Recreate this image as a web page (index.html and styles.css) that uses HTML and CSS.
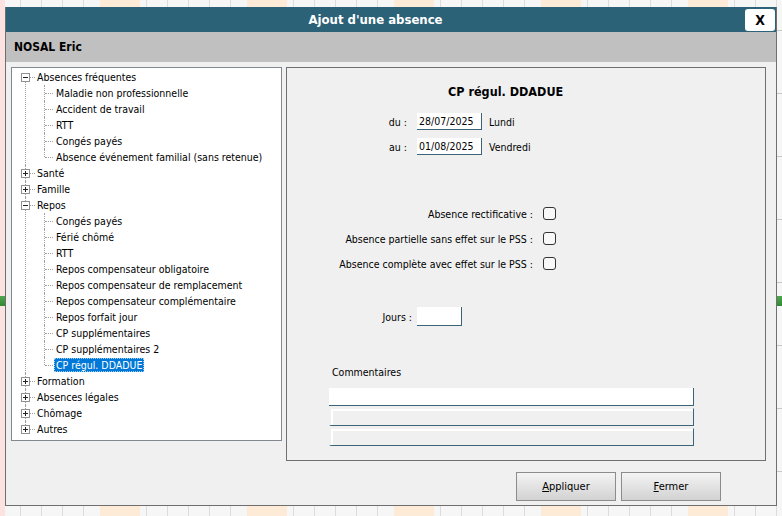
FILE: index.html
```html
<!DOCTYPE html>
<html lang="fr">
<head>
  <meta charset="UTF-8">
  <title>Ajout d'une absence</title>
  <link rel="stylesheet" href="styles.css">
</head>
<body>
  <div class="sheet">
    <div class="dialog">
      <div class="titlebar">
        <div class="title">Ajout d'une absence</div>
        <button class="close-btn">X</button>
      </div>
      <div class="namebar">NOSAL Eric</div>

      <div class="content">
        <!-- Tree of absence types -->
        <div class="tree-box">
          <ul class="tree">
            <li class="node">
              <div class="row">
                <svg class="toggle" width="9" height="9" viewBox="0 0 9 9"><rect x="0.5" y="0.5" width="8" height="8" fill="#fff" stroke="#919191"/><path d="M2 4.5h5" stroke="#222"/></svg>
                <span class="label">Absences fréquentes</span>
              </div>
              <ul class="leaves">
                <li><span class="label">Maladie non professionnelle</span></li>
                <li><span class="label">Accident de travail</span></li>
                <li><span class="label">RTT</span></li>
                <li><span class="label">Congés payés</span></li>
                <li><span class="label">Absence événement familial (sans retenue)</span></li>
              </ul>
            </li>
            <li class="node">
              <div class="row">
                <svg class="toggle" width="9" height="9" viewBox="0 0 9 9"><rect x="0.5" y="0.5" width="8" height="8" fill="#fff" stroke="#919191"/><path d="M2 4.5h5M4.5 2v5" stroke="#222"/></svg>
                <span class="label">Santé</span>
              </div>
            </li>
            <li class="node">
              <div class="row">
                <svg class="toggle" width="9" height="9" viewBox="0 0 9 9"><rect x="0.5" y="0.5" width="8" height="8" fill="#fff" stroke="#919191"/><path d="M2 4.5h5M4.5 2v5" stroke="#222"/></svg>
                <span class="label">Famille</span>
              </div>
            </li>
            <li class="node">
              <div class="row">
                <svg class="toggle" width="9" height="9" viewBox="0 0 9 9"><rect x="0.5" y="0.5" width="8" height="8" fill="#fff" stroke="#919191"/><path d="M2 4.5h5" stroke="#222"/></svg>
                <span class="label">Repos</span>
              </div>
              <ul class="leaves">
                <li><span class="label">Congés payés</span></li>
                <li><span class="label">Férié chômé</span></li>
                <li><span class="label">RTT</span></li>
                <li><span class="label">Repos compensateur obligatoire</span></li>
                <li><span class="label">Repos compensateur de remplacement</span></li>
                <li><span class="label">Repos compensateur complémentaire</span></li>
                <li><span class="label">Repos forfait jour</span></li>
                <li><span class="label">CP supplémentaires</span></li>
                <li><span class="label">CP supplémentaires 2</span></li>
                <li><span class="label selected">CP régul. DDADUE</span></li>
              </ul>
            </li>
            <li class="node">
              <div class="row">
                <svg class="toggle" width="9" height="9" viewBox="0 0 9 9"><rect x="0.5" y="0.5" width="8" height="8" fill="#fff" stroke="#919191"/><path d="M2 4.5h5M4.5 2v5" stroke="#222"/></svg>
                <span class="label">Formation</span>
              </div>
            </li>
            <li class="node">
              <div class="row">
                <svg class="toggle" width="9" height="9" viewBox="0 0 9 9"><rect x="0.5" y="0.5" width="8" height="8" fill="#fff" stroke="#919191"/><path d="M2 4.5h5M4.5 2v5" stroke="#222"/></svg>
                <span class="label">Absences légales</span>
              </div>
            </li>
            <li class="node">
              <div class="row">
                <svg class="toggle" width="9" height="9" viewBox="0 0 9 9"><rect x="0.5" y="0.5" width="8" height="8" fill="#fff" stroke="#919191"/><path d="M2 4.5h5M4.5 2v5" stroke="#222"/></svg>
                <span class="label">Chômage</span>
              </div>
            </li>
            <li class="node">
              <div class="row">
                <svg class="toggle" width="9" height="9" viewBox="0 0 9 9"><rect x="0.5" y="0.5" width="8" height="8" fill="#fff" stroke="#919191"/><path d="M2 4.5h5M4.5 2v5" stroke="#222"/></svg>
                <span class="label">Autres</span>
              </div>
            </li>
          </ul>
        </div>

        <div class="side">
          <!-- Detail of the selected absence -->
          <div class="panel">
            <div class="panel-title">CP régul. DDADUE</div>

            <div class="field date-row first">
              <span class="field-label">du :</span>
              <span class="box date-box">28/07/2025</span>
              <span class="day">Lundi</span>
            </div>
            <div class="field date-row">
              <span class="field-label">au :</span>
              <span class="box date-box">01/08/2025</span>
              <span class="day">Vendredi</span>
            </div>

            <div class="field check-row first">
              <span class="field-label">Absence rectificative :</span>
              <span class="check"></span>
            </div>
            <div class="field check-row">
              <span class="field-label">Absence partielle sans effet sur le PSS :</span>
              <span class="check"></span>
            </div>
            <div class="field check-row">
              <span class="field-label">Absence complète avec effet sur le PSS :</span>
              <span class="check"></span>
            </div>

            <div class="field days-row">
              <span class="field-label">Jours :</span>
              <span class="box days-box"></span>
            </div>

            <div class="comment-label">Commentaires</div>
            <div class="comment active"></div>
            <div class="comment"></div>
            <div class="comment"></div>
          </div>

          <div class="actions">
            <button class="btn"><u>A</u>ppliquer</button>
            <button class="btn"><u>F</u>ermer</button>
          </div>
        </div>
      </div>
    </div>
  </div>
</body>
</html>
```

FILE: styles.css
```css
/* General styling */
body {
  margin: 0;
  font-family: "DejaVu Sans Condensed", "DejaVu Sans", sans-serif;
  font-size: 10.5px;
  color: #000;
}
.sheet {
  width: 782px;
  height: 516px;
  overflow: hidden;
  box-sizing: border-box;
  padding: 7px 0 0 5px;
  background-color: #f6f6f6;
  background-image:
    linear-gradient(#52a552, #2f8a2f),
    linear-gradient(#52a552, #2f8a2f),
    linear-gradient(90deg, #fde2e2 0 5px, transparent 5px),
    repeating-linear-gradient(180deg, transparent 0 30px, #c8c8c8 30px 31px, transparent 31px 63px),
    repeating-linear-gradient(90deg, transparent 0 100px, #fdebd8 100px 140px, transparent 140px 147px),
    repeating-linear-gradient(90deg, transparent 0 20px, #dcdcdc 20px 21px);
  background-size: 5px 10px, 5px 10px, auto, auto, auto, auto;
  background-position: 777px 296px, 0 296px, 0 0, 0 0, 0 0, 0 0;
  background-repeat: no-repeat, no-repeat, no-repeat, repeat, repeat, repeat;
}

/* Dialog window */
.dialog {
  width: 772px;
  height: 499px;
  box-sizing: border-box;
  border: 1px solid #6f6f6f;
  border-top: none;
  background: #f0f0f0;
}
.titlebar {
  display: flex;
  align-items: center;
  height: 25px;
  background: #2c6278;
}
.title {
  flex: 1;
  text-align: center;
  color: #fff;
  font-weight: bold;
  font-size: 13px;
}
.close-btn {
  width: 30px;
  height: 22px;
  margin: 1px 1px 0 0;
  border: none;
  border-radius: 3px;
  background: #fff;
  font-family: inherit;
  font-weight: bold;
  font-size: 14px;
  color: #000;
  padding: 0;
}
.namebar {
  height: 30px;
  line-height: 30px;
  padding-left: 8px;
  background: #c0c0c0;
  font-weight: bold;
  font-size: 12px;
}
.content {
  display: flex;
  gap: 4px;
  padding: 5px 0 0 5px;
}

/* Tree */
.tree-box {
  width: 271px;
  height: 374px;
  box-sizing: border-box;
  border: 1px solid #828790;
  background: #fff;
}
.tree, .tree ul {
  list-style: none;
  margin: 0;
  padding: 0;
}
.tree {
  padding-top: 1px;
}
.node {
  position: relative;
}
.node::before {
  content: "";
  position: absolute;
  left: 13px;
  top: 0;
  bottom: 0;
  border-left: 1px dotted #a0a0a0;
}
.node:first-child::before {
  top: 8px;
}
.node:last-child::before {
  bottom: auto;
  height: 8px;
}
.row {
  position: relative;
  display: flex;
  align-items: center;
  height: 16px;
}
.row::after {
  content: "";
  position: absolute;
  left: 18px;
  top: 8px;
  width: 5px;
  border-top: 1px dotted #a0a0a0;
}
.toggle {
  position: relative;
  z-index: 1;
  margin-left: 9px;
}
.row .label {
  margin-left: 5px;
}
.label {
  padding: 0 2px;
  line-height: 14px;
  white-space: nowrap;
}
.leaves li {
  position: relative;
  display: flex;
  align-items: center;
  height: 16px;
  padding-left: 42px;
}
.leaves li::before {
  content: "";
  position: absolute;
  left: 32px;
  top: 0;
  bottom: 0;
  border-left: 1px dotted #a0a0a0;
}
.leaves li:last-child::before {
  bottom: auto;
  height: 8px;
}
.leaves li::after {
  content: "";
  position: absolute;
  left: 33px;
  top: 8px;
  width: 8px;
  border-top: 1px dotted #a0a0a0;
}
.label.selected {
  background: #0078d7;
  color: #fff;
  padding: 0 1px;
  border: 1px dotted #9fcdf2;
  line-height: 12px;
}

/* Detail panel */
.side {
  width: 480px;
}
.panel {
  height: 394px;
  box-sizing: border-box;
  border: 1px solid #707070;
  background: #f0f0f0;
}
.panel-title {
  margin-top: 16px;
  padding-left: 161px;
  line-height: 16px;
  font-weight: bold;
  font-size: 12.5px;
}
.field {
  display: flex;
  align-items: center;
}
.field-label {
  text-align: right;
  white-space: nowrap;
}
.box {
  box-sizing: border-box;
  background: #fff;
  border-right: 1px solid #3c6478;
  border-bottom: 1px solid #3c6478;
}
.date-row {
  height: 17px;
  margin-top: 8px;
}
.date-row.first {
  margin-top: 13px;
}
.date-row .field-label {
  width: 120px;
  margin-right: 10px;
}
.date-box {
  width: 65px;
  height: 17px;
  line-height: 16px;
  padding-left: 2px;
}
.day {
  margin-left: 7px;
}
.check-row {
  height: 13px;
  margin-top: 12px;
}
.check-row.first {
  margin-top: 52px;
}
.check-row .field-label {
  width: 246px;
  margin-right: 10px;
}
.check {
  width: 13px;
  height: 13px;
  box-sizing: border-box;
  border: 1px solid #333;
  border-radius: 3px;
  background: #f8f8f8;
}
.days-row {
  height: 19px;
  margin-top: 37px;
}
.days-row .field-label {
  width: 125px;
  margin-right: 5px;
}
.days-box {
  width: 45px;
  height: 19px;
}
.comment-label {
  margin-top: 38px;
  padding-left: 45px;
  line-height: 16px;
}
.comment {
  width: 365px;
  height: 18px;
  margin: 2px 0 0 42px;
  box-sizing: border-box;
  background: #f0f0f0;
  border-top: 1px solid #f0f0f0;
  border-left: 2px solid #f0f0f0;
  border-right: 1px solid #3c6478;
  border-bottom: 1px solid #3c6478;
  box-shadow: inset 2px 2px 0 #fff;
}
.comment.active {
  margin-top: 8px;
  background: #fff;
  border-top: none;
  border-left: none;
  box-shadow: none;
}

/* Buttons */
.actions {
  display: flex;
  gap: 5px;
  margin: 11px 0 0 230px;
}
.btn {
  width: 100px;
  height: 29px;
  border: 1px solid #8c8c8c;
  background: linear-gradient(#f4f4f4, #d2d2d2);
  font-family: inherit;
  font-size: 11px;
  color: #000;
  padding: 0;
}
```
